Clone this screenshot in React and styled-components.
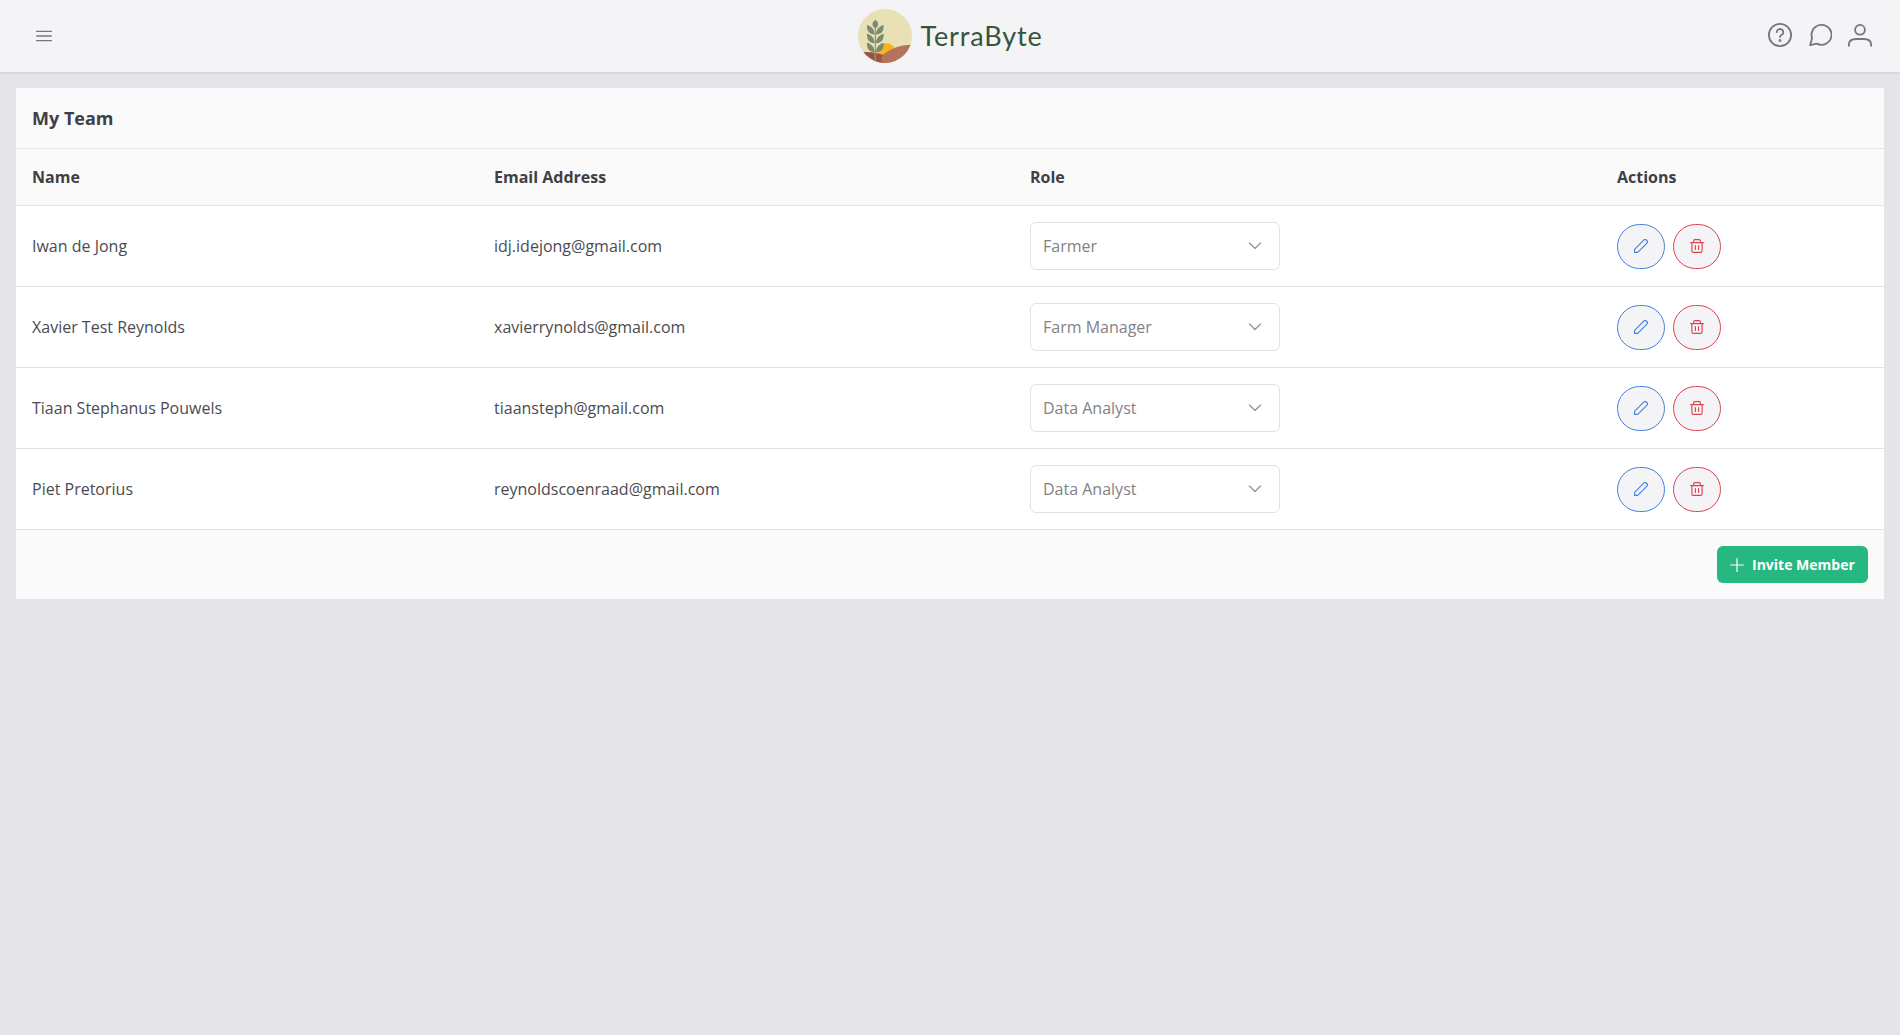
import React from "react";
import styled, { createGlobalStyle, css } from "styled-components";

const GlobalStyle = createGlobalStyle`
  *, *::before, *::after { box-sizing: border-box; }
  body {
    margin: 0;
    min-height: 100vh;
    background: #e4e4e9;
    color: #4b4b52;
    font-family: "Open Sans", "Noto Sans", sans-serif;
    font-size: 16px;
  }
  button { font-family: inherit; cursor: pointer; }
`;

const NavBar = styled.header`
  display: grid;
  grid-template-columns: 1fr auto 1fr;
  align-items: center;
  height: 72px;
  padding: 0 28px;
  background: #f4f4f6;
  box-shadow: 0 1px 3px rgba(0, 0, 0, 0.1);
`;

const IconButton = styled.button`
  display: flex;
  padding: 0;
  border: 0;
  background: none;
  color: #75757d;
`;

const MenuArea = styled.div`
  display: flex;
  padding-left: 8px;
`;

const Brand = styled.div`
  display: flex;
  align-items: center;
  gap: 9px;
`;

const BrandName = styled.span`
  width: 122px;
  color: #35553c;
  font-family: Lato, sans-serif;
  font-size: 27px;
  line-height: 54px;
  letter-spacing: 0.85px;
  white-space: nowrap;
`;

const NavActions = styled.nav`
  display: flex;
  justify-content: flex-end;
  gap: 16px;
  padding-bottom: 2px;
`;

const Card = styled.main`
  margin: 16px;
  background: #fff;
`;

const CardTitle = styled.h1`
  display: flex;
  align-items: center;
  height: 61px;
  margin: 0;
  padding: 0 16px;
  border-bottom: 1px solid #e3e3e5;
  background: #fafafa;
  color: #3f3f46;
  font-size: 18px;
  font-weight: 700;
`;

const Table = styled.table`
  width: 100%;
  border-collapse: separate;
  border-spacing: 0;
  table-layout: fixed;
`;

const Column = styled.col`
  width: ${(p) => p.$width};
`;

const HeaderCell = styled.th`
  height: 57px;
  padding: 0 16px;
  border-bottom: 1px solid #e3e3e5;
  background: #fafafa;
  color: #3f3f46;
  font-weight: 700;
  text-align: left;
`;

const Cell = styled.td`
  height: 81px;
  padding: 0 16px;
  border-bottom: 1px solid #e3e3e5;
`;

const Select = styled.div`
  display: flex;
  align-items: center;
  justify-content: space-between;
  width: 250px;
  height: 48px;
  padding: 0 17px 0 12px;
  border: 1px solid #e2e2e4;
  border-radius: 6px;
  color: #828285;
`;

const RowActions = styled.div`
  display: flex;
  gap: 8px;
`;

const tones = {
  edit: css`
    border-color: #4780e0;
    color: #4780e0;
  `,
  remove: css`
    border-color: #d9444f;
    color: #d9444f;
  `,
};

const RoundButton = styled.button`
  display: flex;
  align-items: center;
  justify-content: center;
  width: 48px;
  height: 45px;
  padding: 0 0 1px;
  border: 1px solid;
  border-radius: 32px;
  background: #f4f4f6;
  ${(p) => tones[p.$tone]}
`;

const CardFooter = styled.footer`
  display: flex;
  justify-content: flex-end;
  padding: 16px;
  background: #fafafa;
`;

const InviteButton = styled.button`
  display: flex;
  align-items: center;
  gap: 8px;
  width: 151px;
  height: 37px;
  padding: 0 13px;
  border: 0;
  border-radius: 6px;
  background: #27b881;
  color: #fff;
  font-size: 14px;
  font-weight: 700;
  white-space: nowrap;
`;

const Glyph = styled.svg`
  display: block;
  flex: none;
  width: ${(p) => p.$size}px;
  height: ${(p) => p.$size}px;
  fill: none;
  stroke: ${(p) => p.$color || "currentColor"};
  stroke-width: ${(p) => p.$stroke};
  stroke-linecap: round;
  stroke-linejoin: round;
`;

const LogoMark = styled.svg`
  display: block;
  width: 54px;
  height: 54px;
`;

function BarsIcon() {
  return (
    <Glyph $size={16} $stroke={1.3} viewBox="0 0 16 16">
      <path d="M.6 3.4h14.8M.6 8h14.8M.6 12.6h14.8" />
    </Glyph>
  );
}

function HelpIcon() {
  return (
    <Glyph $size={24} $stroke={1.8} viewBox="0 0 24 24">
      <circle cx="12" cy="12" r="11.1" />
      <path d="M8.7 9.2a3.3 3.1 0 1 1 5.1 2.5c-1.2.7-1.8 1.1-1.8 2.4" />
      <circle cx="12" cy="17.6" r=".6" />
    </Glyph>
  );
}

function CommentIcon() {
  return (
    <Glyph $size={24} $stroke={1.8} viewBox="0 0 24 24">
      <path d="M2.1 22.200 4.100 15.100A10 10 0 1 1 8.800 20.600Z" />
    </Glyph>
  );
}

function UserIcon() {
  return (
    <Glyph $size={24} $stroke={1.8} viewBox="0 0 24 24">
      <circle cx="12" cy="6.800" r="4.900" />
      <path d="M.9 22.800V21.400C.9 17.500 4.500 16 8.500 16H15.500C19.500 16 23.100 17.500 23.100 21.400V22.800" />
    </Glyph>
  );
}

function ChevronIcon() {
  return (
    <Glyph $size={14} $stroke={1.4} $color="#97979c" viewBox="0 0 14 14">
      <path d="M1.500 4 7 9.500 12.500 4" />
    </Glyph>
  );
}

function PencilIcon() {
  return (
    <Glyph $size={14} $stroke={1.15} viewBox="0 0 14 14">
      <path d="M.6 13.400v-3.100L9.700 1.200c.8-.8 2-.8 2.800 0l.3.3c.8.8.8 2 0 2.800L3.700 13.400Z" />
    </Glyph>
  );
}

function TrashIcon() {
  return (
    <Glyph $size={14} $stroke={1.15} viewBox="0 0 14 14">
      <path d="M.6 3.600h12.800M3.600 3.600V2c0-.8.5-1.400 1.300-1.400h4.200c.8 0 1.300.6 1.300 1.400v1.600M1.900 3.600v8.300c0 .9.6 1.500 1.500 1.500h7.200c.9 0 1.500-.6 1.500-1.500V3.600M5.400 6.600v3.800M8.600 6.600v3.800" />
    </Glyph>
  );
}

function PlusIcon() {
  return (
    <Glyph $size={14} $stroke={1.2} viewBox="0 0 14 14">
      <path d="M7 .6v12.800M.6 7h12.800" />
    </Glyph>
  );
}

function Logo() {
  return (
    <LogoMark viewBox="0 0 162 162">
      <clipPath id="disc">
        <circle cx="81" cy="81" r="81" />
      </clipPath>
      <g clipPath="url(#disc)">
        <rect width="162" height="162" fill="#e8e1b5" />
        <circle cx="85" cy="129" r="27" fill="#f9b31c" />
        <path d="M0 131c30-5 62 0 92 12v25H0Z" fill="#985642" />
        <path d="M72 140c22-20 52-33 90-33v60H76c-6-9-7-17-4-27Z" fill="#b4745a" />
        <path d="M52 50v82" stroke="#7c8a72" strokeWidth="3" />
        <path d="M52 130v30" stroke="#8d8d87" strokeWidth="5" />
        <path d="M52 32c10 9 12 15 3 24h-6c-9-9-7-15 3-24Z" fill="#7c8a72" />
        {[48, 74, 101].map((y) => (
          <g key={y} transform={`translate(52 ${y})`} fill="#7c8a72">
            <path d="M-2 29C-18 27-26 19-25 0-12 4-2 12-2 29Z" />
            <path d="M2 29C18 27 26 19 25 0 12 4 2 12 2 29Z" />
          </g>
        ))}
      </g>
    </LogoMark>
  );
}

const members = [
  { name: "Iwan de Jong", email: "idj.idejong@gmail.com", role: "Farmer" },
  { name: "Xavier Test Reynolds", email: "xavierrynolds@gmail.com", role: "Farm Manager" },
  { name: "Tiaan Stephanus Pouwels", email: "tiaansteph@gmail.com", role: "Data Analyst" },
  { name: "Piet Pretorius", email: "reynoldscoenraad@gmail.com", role: "Data Analyst" },
];

function MemberRow({ member }) {
  return (
    <tr>
      <Cell>{member.name}</Cell>
      <Cell>{member.email}</Cell>
      <Cell>
        <Select>
          {member.role}
          <ChevronIcon />
        </Select>
      </Cell>
      <Cell>
        <RowActions>
          <RoundButton $tone="edit" aria-label="Edit"><PencilIcon /></RoundButton>
          <RoundButton $tone="remove" aria-label="Delete"><TrashIcon /></RoundButton>
        </RowActions>
      </Cell>
    </tr>
  );
}

export default function App() {
  return (
    <>
      <GlobalStyle />
      <NavBar>
        <MenuArea>
          <IconButton aria-label="Menu"><BarsIcon /></IconButton>
        </MenuArea>
        <Brand>
          <Logo />
          <BrandName>TerraByte</BrandName>
        </Brand>
        <NavActions>
          <IconButton aria-label="Help"><HelpIcon /></IconButton>
          <IconButton aria-label="Messages"><CommentIcon /></IconButton>
          <IconButton aria-label="Account"><UserIcon /></IconButton>
        </NavActions>
      </NavBar>
      <Card>
        <CardTitle>My Team</CardTitle>
        <Table>
          <colgroup>
            <Column $width="462px" />
            <Column $width="536px" />
            <Column $width="587px" />
            <Column $width="auto" />
          </colgroup>
          <thead>
            <tr>
              <HeaderCell>Name</HeaderCell>
              <HeaderCell>Email Address</HeaderCell>
              <HeaderCell>Role</HeaderCell>
              <HeaderCell>Actions</HeaderCell>
            </tr>
          </thead>
          <tbody>
            {members.map((m) => <MemberRow key={m.email} member={m} />)}
          </tbody>
        </Table>
        <CardFooter>
          <InviteButton>
            <PlusIcon />
            Invite Member
          </InviteButton>
        </CardFooter>
      </Card>
    </>
  );
}
